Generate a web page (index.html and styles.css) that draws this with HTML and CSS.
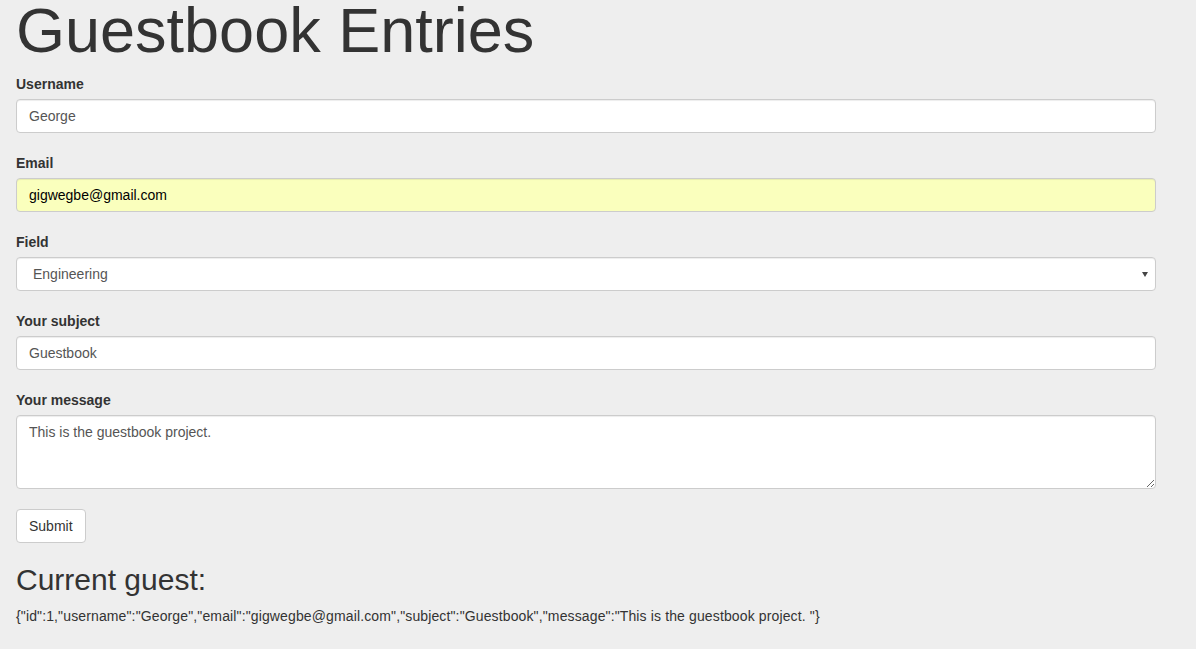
FILE: index.html
```html
<!DOCTYPE html>
<html>
<head>
<meta charset="utf-8">
<title>Guestbook Entries</title>
<link rel="stylesheet" href="styles.css">
</head>
<body>
<div class="container">
  <h1 class="title">Guestbook Entries</h1>
  <form class="form">
    <div class="form-group">
      <label class="label" for="username">Username</label>
      <input class="control" id="username" type="text" value="George">
    </div>
    <div class="form-group">
      <label class="label" for="email">Email</label>
      <input class="control autofill" id="email" type="text" value="gigwegbe@gmail.com">
    </div>
    <div class="form-group">
      <label class="label" for="field">Field</label>
      <div class="select-wrap">
        <select class="control select" id="field">
          <option>Engineering</option>
        </select>
        <span class="caret"></span>
      </div>
    </div>
    <div class="form-group">
      <label class="label" for="subject">Your subject</label>
      <input class="control" id="subject" type="text" value="Guestbook">
    </div>
    <div class="form-group">
      <label class="label" for="message">Your message</label>
      <textarea class="control textarea" id="message" rows="3">This is the guestbook project.</textarea>
    </div>
    <div class="actions">
      <button class="btn" type="button">Submit</button>
    </div>
  </form>
  <h2 class="subtitle">Current guest:</h2>
  <p class="json">{"id":1,"username":"George","email":"gigwegbe@gmail.com","subject":"Guestbook","message":"This is the guestbook project. "}</p>
</div>
</body>
</html>
```

FILE: styles.css
```css
* { box-sizing: border-box; }
html, body {
  margin: 0;
  padding: 0;
  background: #eeeeee;
}
body {
  font-family: "Liberation Sans", Arial, Helvetica, sans-serif;
  font-size: 14px;
  line-height: 1.42857;
  color: #333333;
}
.container {
  width: 1156px;
  padding-left: 16px;
}
.title {
  margin: 0 0 14px 0;
  font-size: 63px;
  font-weight: 400;
  line-height: 60px;
  color: #333333;
}
.form { margin: 0; }
.form-group {
  margin-bottom: 20px;
}
.label {
  display: block;
  font-weight: 700;
  margin-bottom: 5px;
  line-height: 20px;
}
.control {
  display: block;
  width: 100%;
  height: 34px;
  padding: 6px 12px;
  font-family: "Liberation Sans", Arial, Helvetica, sans-serif;
  font-size: 14px;
  line-height: 20px;
  color: #555555;
  background: #ffffff;
  border: 1px solid #cccccc;
  border-radius: 4px;
  box-shadow: inset 0 1px 1px rgba(0, 0, 0, 0.075);
  outline: none;
  margin: 0;
}
.autofill {
  background: #faffbd;
  color: #000000;
}
.select-wrap {
  position: relative;
}
.select {
  -webkit-appearance: none;
  appearance: none;
  padding-left: 16px;
}
.caret {
  position: absolute;
  right: 8px;
  top: 15px;
  width: 0;
  height: 0;
  border-left: 3.5px solid transparent;
  border-right: 3.5px solid transparent;
  border-top: 5px solid #444444;
  pointer-events: none;
}
.textarea {
  height: 74px;
  resize: vertical;
}
.actions {
  margin: 0;
}
.btn {
  display: inline-block;
  height: 34px;
  padding: 6px 12px;
  font-family: "Liberation Sans", Arial, Helvetica, sans-serif;
  font-size: 14px;
  line-height: 20px;
  color: #333333;
  background: #ffffff;
  border: 1px solid #cccccc;
  border-radius: 4px;
  cursor: pointer;
}
.subtitle {
  margin: 20px 0 10px 0;
  font-size: 30px;
  font-weight: 400;
  line-height: 33px;
  color: #333333;
}
.json {
  margin: 0 0 10px 0;
  line-height: 20px;
  letter-spacing: 0.13px;
}
```
